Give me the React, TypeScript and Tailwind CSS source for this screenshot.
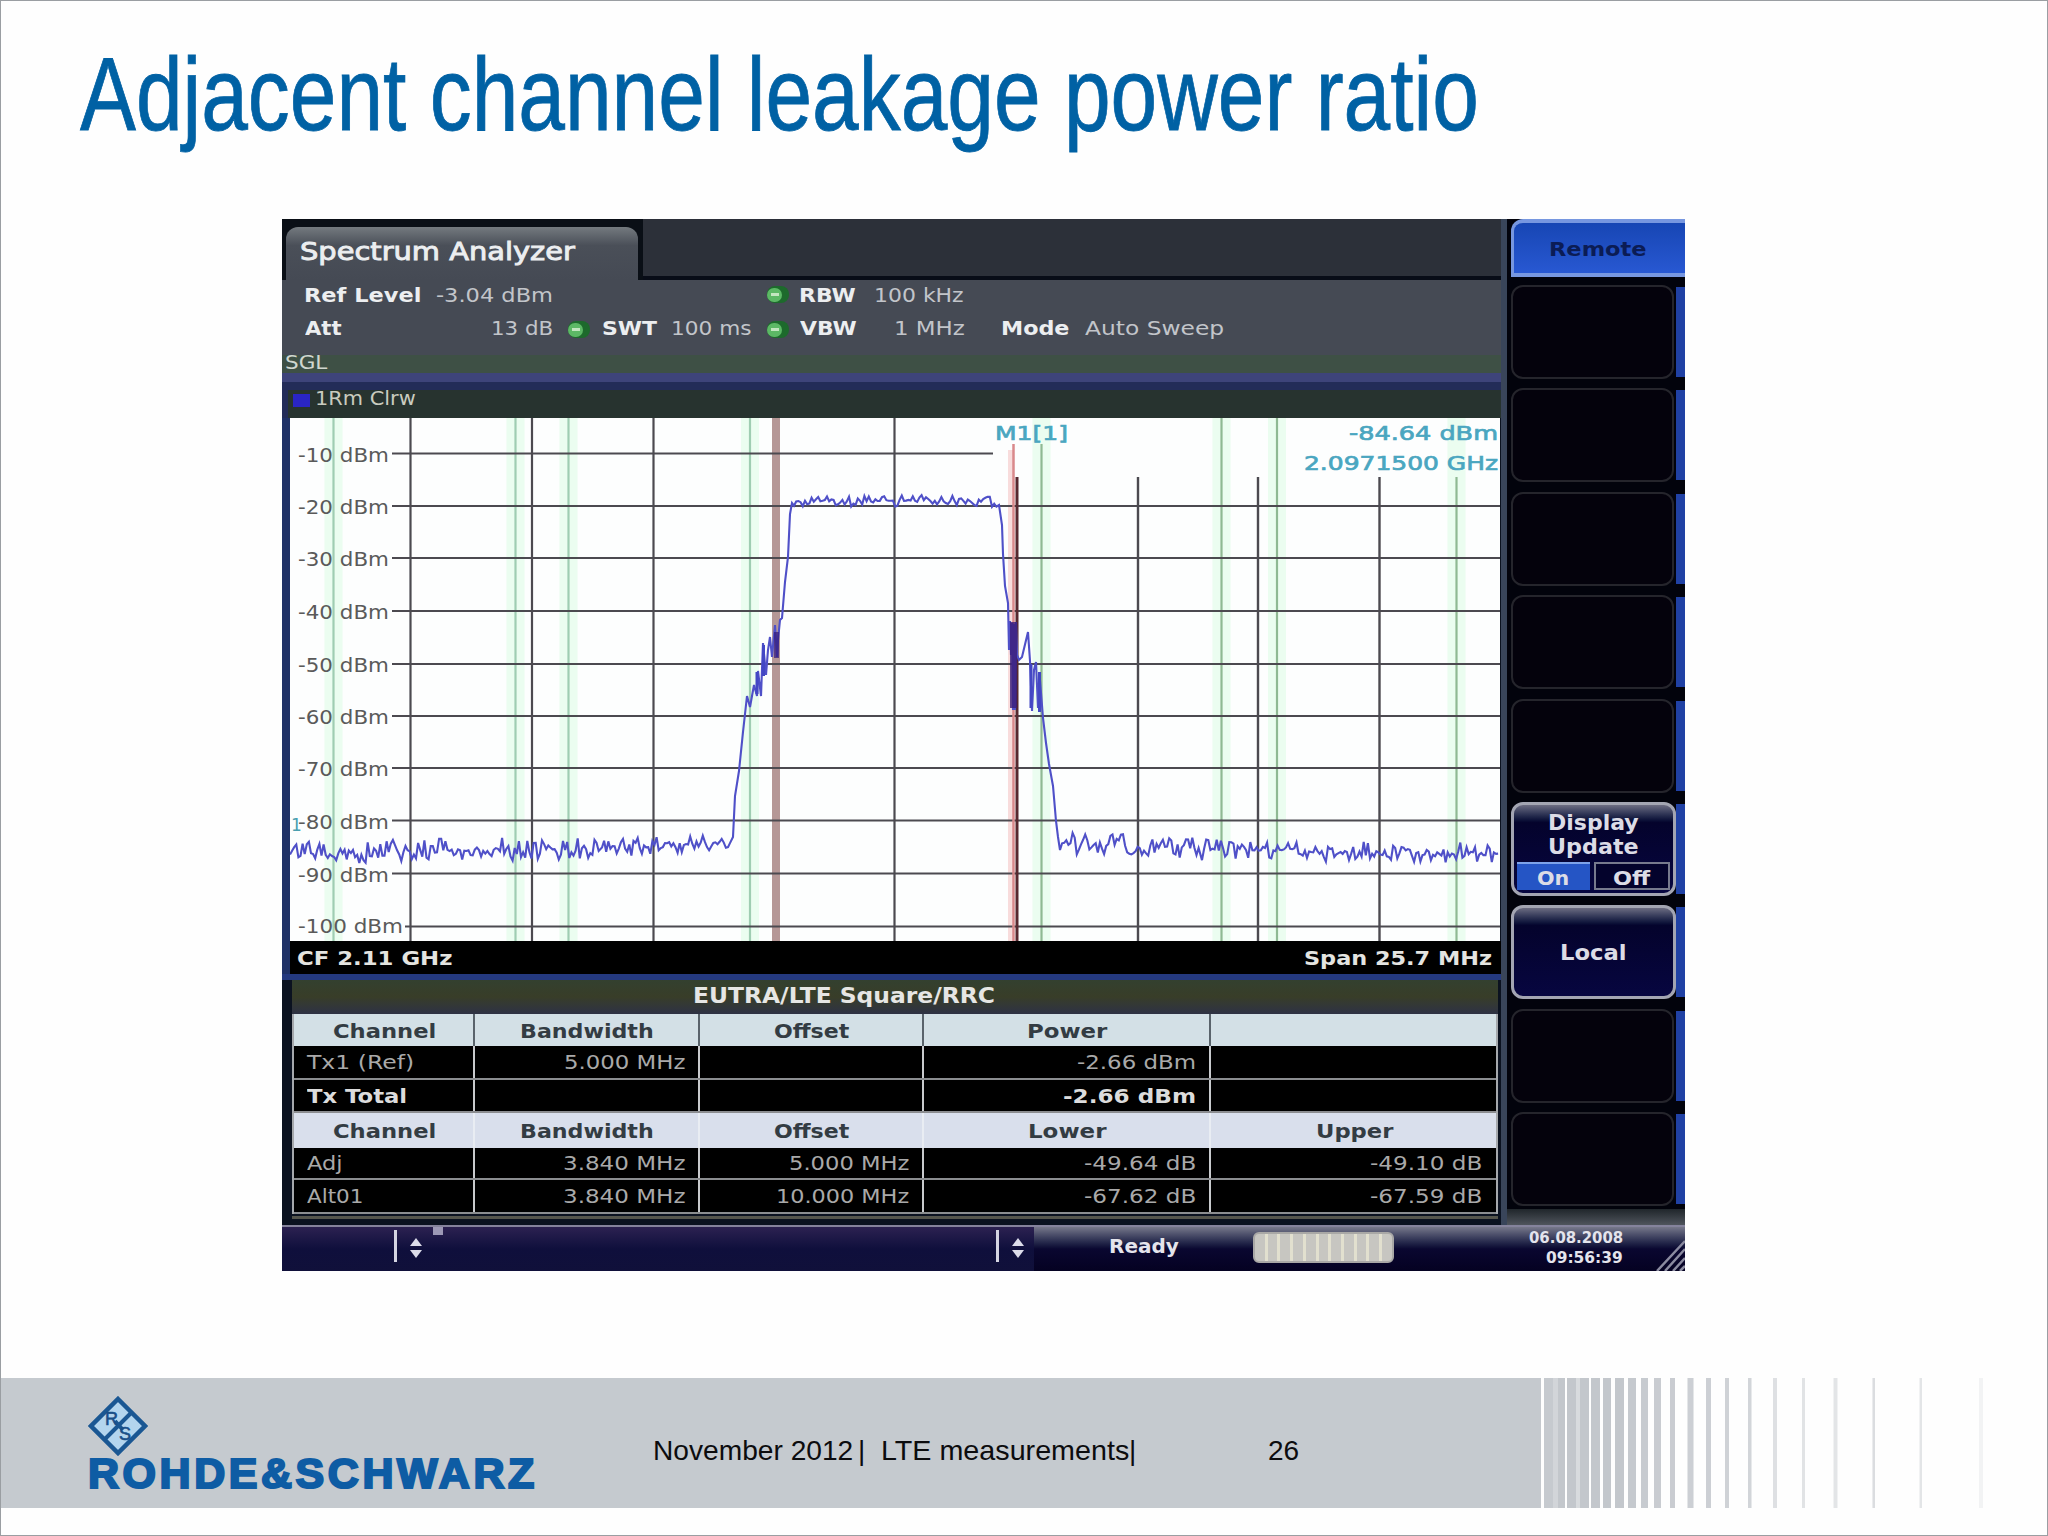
import { useLayoutEffect, useRef, useState } from "react";
import type { ReactNode } from "react";

// Text squeezed or stretched to an exact width
const Fit = ({
  w,
  className = "",
  children,
}: {
  w: number;
  className?: string;
  children: ReactNode;
}) => {
  const ref = useRef<HTMLSpanElement>(null);
  const [scale, setScale] = useState(1);

  useLayoutEffect(() => {
    if (ref.current) setScale(w / ref.current.offsetWidth);
  }, [w]);

  return (
    <span className={`block shrink-0 ${className}`} style={{ width: w }}>
      <span
        ref={ref}
        className="inline-block origin-left whitespace-pre"
        style={{ transform: `scaleX(${scale})` }}
      >
        {children}
      </span>
    </span>
  );
};

const Dot = ({ className = "" }: { className?: string }) => (
  <span
    className={`flex h-[17px] w-[22px] shrink-0 items-center rounded-lg bg-[#1d6a2c] ${className}`}
  >
    <span className="flex h-[14px] w-[15px] items-center justify-center rounded-full bg-[#5cb865]">
      <span className="h-[3px] w-2 bg-[#c3e6c0]" />
    </span>
  </span>
);

const gridX = [410.5, 532, 653.5, 894.5];
const gridXRight = [1138, 1258, 1379.5];
const levels = [453.5, 506, 558, 611, 664, 716, 768, 820.5, 873.5, 926.5];
const channels = [333.5, 515.5, 568.5, 750, 1041.5, 1221.5, 1277, 1456.5];

const noise = (i: number) => {
  const v = Math.sin(i * 12.9898) * 43758.5453;
  return v - Math.floor(v) - 0.5;
};

const run = (x0: number, x1: number, y0: number, y1: number, amp: number, step: number) => {
  const pts: string[] = [];
  for (let x = x0; x <= x1; x += step) {
    const t = (x - x0) / (x1 - x0);
    const n = noise(x);
    pts.push(`${x.toFixed(1)},${(y0 + (y1 - y0) * t + (n * 0.5 + n * Math.abs(n) * 2) * amp).toFixed(1)}`);
  }
  return pts.join(" ");
};

const trace = [
  run(290, 600, 852, 849, 16, 2.1),
  run(602, 731, 848, 843, 14, 2.1),
  "733,837 735,796 739,771 743,732 747,696 750,707 754,685 757,696 758,671 761,696 763,643 766,675 768,650 770,637 772,657 775,625 777,657 778,640 780,620 782,618 785,582 788,557 790,514 792,503",
  run(794, 998, 501, 501, 8, 2.2),
  "999,505 1002,525 1003,554 1005,586 1008,603 1009,650 1010,621 1011,655 1012,623 1013,710 1014,624 1015,710 1016,622 1017,655 1019,660 1022,657 1028,632 1030,661 1032,711 1034,670 1036,662 1038,708 1040,680 1043,718 1046,743 1049,764 1053,786 1056,821 1058,837",
  run(1060, 1200, 843, 848, 15, 2.1),
  run(1202, 1500, 850, 853, 14, 2.1),
].join(" ");

const Plot = () => (
  <svg
    viewBox="290 418 1210 523"
    className="block h-[523px] w-[1210px] shrink-0 bg-[#fdfefe] font-['DejaVu_Sans']"
  >
    {channels.map((x) => (
      <g key={x}>
        <rect x={x - 9} y="418" width="18" height="523" fill="#dcfbe4" opacity="0.55" />
        <line
          x1={x}
          x2={x}
          y1={x === 1456.5 ? 477 : x === 1041.5 ? 444 : 418}
          y2="941"
          stroke={x < 800 ? "#9fcdb2" : "#8fb993"}
          strokeWidth="2.2"
        />
      </g>
    ))}
    <rect x="1008" y="450" width="6" height="491" fill="#f8dcdc" />
    <rect x="772" y="418" width="8" height="523" fill="#b59796" />
    {levels.map((y, i) => (
      <line
        key={y}
        x1={i === 9 ? 405 : 392}
        x2={i === 0 ? 993 : 1500}
        y1={y}
        y2={y}
        stroke="#4c4a50"
        strokeWidth="2"
      />
    ))}
    {gridX.map((x) => (
      <line key={x} x1={x} x2={x} y1="418" y2="941" stroke="#4c4a50" strokeWidth="2.2" />
    ))}
    {gridXRight.map((x) => (
      <line key={x} x1={x} x2={x} y1="477" y2="941" stroke="#4c4a50" strokeWidth="2.4" />
    ))}
    <line x1="1013.5" x2="1013.5" y1="444" y2="941" stroke="#d9898b" strokeWidth="2.5" />
    <line x1="1017" x2="1017" y1="477" y2="941" stroke="#57282f" strokeWidth="3" />
    <polyline points={trace} fill="none" stroke="#4f50c8" strokeWidth="2.1" />
    <path d="M757 672V694M763.5 645V676M1031 664V708M1039.5 672V712" stroke="#4347c4" strokeWidth="3" />
    <rect x="1010" y="622" width="7" height="86" fill="#3b1d78" opacity="0.8" />
    <rect x="774" y="632" width="5" height="26" fill="#33187a" opacity="0.7" />
    <g fontSize="19" fill="#5a5a5a">
      {levels.map((y, i) => (
        <text
          key={y}
          x="298"
          y={i === 9 ? y + 6 : y + 8}
          textLength={i === 9 ? 105 : 91}
          lengthAdjust="spacingAndGlyphs"
        >
          {`-${(i + 1) * 10} dBm`}
        </text>
      ))}
    </g>
    <text x="291" y="831" fontSize="17" fill="#4a9fb0">
      1
    </text>
    <g fontSize="20" fill="#4aa6c0" stroke="#4aa6c0" strokeWidth="0.7">
      <text x="995" y="440" textLength="73" lengthAdjust="spacingAndGlyphs">
        M1[1]
      </text>
      <text x="1349" y="440" textLength="149" lengthAdjust="spacingAndGlyphs">
        -84.64 dBm
      </text>
      <text x="1304" y="470" textLength="194" lengthAdjust="spacingAndGlyphs">
        2.0971500 GHz
      </text>
    </g>
  </svg>
);

type Cell = { text: string; w: number; bold?: boolean };

const rows: { head?: boolean; height: string; cells: (Cell | null)[] }[] = [
  {
    head: true,
    height: "h-[32px]",
    cells: [
      { text: "Channel", w: 103 },
      { text: "Bandwidth", w: 134 },
      { text: "Offset", w: 75 },
      { text: "Power", w: 80 },
      null,
    ],
  },
  {
    height: "h-[34px]",
    cells: [{ text: "Tx1 (Ref)", w: 107 }, { text: "5.000 MHz", w: 121 }, null, { text: "-2.66 dBm", w: 119 }, null],
  },
  {
    height: "h-[33px]",
    cells: [{ text: "Tx Total", w: 100, bold: true }, null, null, { text: "-2.66 dBm", w: 133, bold: true }, null],
  },
  {
    head: true,
    height: "h-[35px]",
    cells: [
      { text: "Channel", w: 103 },
      { text: "Bandwidth", w: 134 },
      { text: "Offset", w: 75 },
      { text: "Lower", w: 78 },
      { text: "Upper", w: 77 },
    ],
  },
  {
    height: "h-[32px]",
    cells: [
      { text: "Adj", w: 36 },
      { text: "3.840 MHz", w: 122 },
      { text: "5.000 MHz", w: 120 },
      { text: "-49.64 dB", w: 112 },
      { text: "-49.10 dB", w: 112 },
    ],
  },
  {
    height: "h-[34px]",
    cells: [
      { text: "Alt01", w: 57 },
      { text: "3.840 MHz", w: 122 },
      { text: "10.000 MHz", w: 133 },
      { text: "-67.62 dB", w: 112 },
      { text: "-67.59 dB", w: 112 },
    ],
  },
];

const ResultTable = () => (
  <div className="ml-[10px] w-[1206px] border-l-2 border-r-2 border-[#a5a8ac] bg-black">
    {rows.map((row, r) => (
      <div
        key={r}
        className={`grid grid-cols-[181px_225px_224px_287px_1fr] ${row.height} ${
          row.head
            ? r === 0
              ? "bg-[#d3e0e6]"
              : "bg-[#d9dfec]"
            : "border-b-2 border-[#8b8d90]"
        }`}
      >
        {row.cells.map((cell, c) => (
          <div
            key={c}
            className={`flex items-center ${
              c < 4
                ? row.head
                  ? r === 0
                    ? "border-r-2 border-[#59636b]"
                    : "border-r-2 border-[#e9edf3]"
                  : "border-r-2 border-[#c8cacd]"
                : ""
            } ${
              row.head
                ? "justify-center pt-px pl-px text-xl font-bold text-[#333c43]"
                : c === 0
                ? "pl-[13px] text-xl"
                : c === 4
                ? "justify-end pr-[14px] text-xl"
                : "justify-end pr-[13px] text-xl"
            } ${row.head ? "" : cell?.bold ? "font-bold text-[#dcdcdc]" : "text-[#a9a9a9]"}`}
          >
            {cell && <Fit w={cell.w}>{cell.text}</Fit>}
          </div>
        ))}
      </div>
    ))}
  </div>
);

const EmptyKey = () => (
  <div className="flex h-[94px] shrink-0 items-stretch">
    <div className="w-[163px] rounded-xl border-2 border-[#25252c] bg-[#04020c]" />
    <div className="my-0.5 ml-0.5 flex-1 bg-[#2041a4]" />
  </div>
);

const SoftKey = ({ children }: { children: ReactNode }) => (
  <div className="flex h-[94px] shrink-0 items-stretch">
    <div className="flex w-[165px] flex-col items-center rounded-xl border-[3px] border-[#a3a5b2] bg-linear-to-b from-[#6d6d82] via-[#04032c] via-20% to-[#070640] font-bold text-[#dcdce6]">
      {children}
    </div>
    <div className="my-0.5 flex-1 bg-[#2041a4]" />
  </div>
);

const Sidebar = () => (
  <div className="flex h-[1006px] w-[178px] flex-col bg-[#02030c] pl-1">
    <div className="flex h-[58px] shrink-0 items-center justify-center rounded-tl-xl border-b-4 border-l-[3px] border-t-4 border-[#7797e0] bg-linear-to-b from-[#1746b4] to-[#2858d2]">
      <Fit w={98} className="-ml-1 pt-0.5 text-xl font-bold text-[#0b1c55]">
        Remote
      </Fit>
    </div>
    <div className="mt-2 flex flex-1 flex-col gap-[9.4px]">
      <EmptyKey />
      <EmptyKey />
      <EmptyKey />
      <EmptyKey />
      <EmptyKey />
      <SoftKey>
        <Fit w={91} className="mt-1.5 text-[22px] leading-[24px]">
          Display
        </Fit>
        <Fit w={91} className="text-[22px] leading-[24px]">
          Update
        </Fit>
        <div className="mt-[3px] flex w-full gap-1 px-[3px] text-xl leading-[28px]">
          <div className="flex h-[28px] flex-1 justify-center border-t-2 border-[#7da3ea] bg-[#2555c5]">
            <Fit w={32}>On</Fit>
          </div>
          <div className="flex h-[28px] flex-1 justify-center border-2 border-[#777a8d] bg-[#04032c]">
            <Fit w={37}>Off</Fit>
          </div>
        </div>
      </SoftKey>
      <SoftKey>
        <Fit w={67} className="mt-[32px] text-[22px] leading-[26px]">
          Local
        </Fit>
      </SoftKey>
      <EmptyKey />
      <EmptyKey />
    </div>
    <div className="-ml-1 h-4 shrink-0 bg-linear-to-b from-[#20262b] to-[#50555d]" />
  </div>
);

const Spinner = ({ className = "" }: { className?: string }) => (
  <div className={`flex items-center gap-3 ${className}`}>
    <div className="h-8 w-[3px] bg-[#d5d5e2]" />
    <svg viewBox="0 0 14 20" className="mt-1 h-5 w-3.5">
      <path d="M7 0l6 8H1zM7 20l6-8H1z" fill="#dcdcea" />
    </svg>
  </div>
);

const StatusBar = () => (
  <div className="flex h-[46px] border-t-2 border-[#85839c] bg-[#10103c] font-bold text-[#e4e4ec]">
    <div className="flex w-[155px] items-start bg-linear-to-b from-[#2c2151] via-[#0f0f3c] to-[#10103a] pt-[3px]">
      <Spinner className="ml-[112px]" />
    </div>
    <div className="flex w-[597px] bg-linear-to-b from-[#2c2151] via-[#0f0f3c] to-[#10103a] pt-[3px]">
      <div className="-mt-[3px] -ml-1 h-2 w-2.5 bg-[#9c98b5]" />
      <Spinner className="ml-[553px] self-start" />
    </div>
    <div className="flex flex-1 items-start bg-linear-to-b from-[#77788a] via-[#0a0730] via-50% to-[#050222]">
      <Fit w={70} className="ml-[75px] mt-[5px] text-xl leading-7">
        Ready
      </Fit>
      <div className="ml-[74px] mt-[5px] flex h-[31px] w-[141px] justify-evenly rounded-md border-2 border-[#a9a8a6] bg-[#c7c6c1]">
        {Array.from({ length: 10 }).map((_, i) => (
          <span key={i} className="w-[3px] bg-[#e2e0cf]" />
        ))}
      </div>
      <div className="ml-[135px] mt-px flex flex-col items-end text-[16px] leading-[19.5px]">
        <Fit w={94}>06.08.2008</Fit>
        <Fit w={77}>09:56:39</Fit>
      </div>
      <svg viewBox="0 0 30 32" className="ml-[32px] mt-[12px] h-8 w-[30px]">
        <path d="M2 32L30 2M10 32L30 10M18 32L30 19M25 32L30 27" stroke="#8b8ba0" strokeWidth="2.5" />
      </svg>
    </div>
  </div>
);

const Analyzer = () => (
  <div className="ml-[281px] flex h-[1052px] w-[1403px] flex-col overflow-hidden bg-[#0a0d12] font-['DejaVu_Sans',sans-serif]">
    <div className="flex h-[1006px]">
      <div className="flex w-[1225px] flex-col border-r-[6px] border-[#39455a] bg-[#0b1220]">
        <div className="flex h-[61px] bg-[#2c3039]">
          <div className="flex w-[361px] bg-[#0a0f16] pl-1 pt-2">
            <div className="flex w-[352px] items-center rounded-t-xl bg-linear-to-b from-[#747a7f] via-[#4a4f58] via-35% to-[#454a54] pl-3.5">
              <Fit w={275} className="-mt-1 text-[25px] text-[#eceef0] [-webkit-text-stroke:0.9px_#eceef0]">
                Spectrum Analyzer
              </Fit>
            </div>
          </div>
          <div className="flex-1 border-b-4 border-[#080c17]" />
        </div>
        <div className="h-[75px] bg-[#454a54] text-xl leading-[33px] text-[#c2c5ca]">
          <div className="flex h-[32px] pl-[22px] leading-[30px]">
            <Fit w={117} className="font-bold text-[#eceef0]">Ref Level</Fit>
            <Fit w={117} className="ml-[15px]">-3.04 dBm</Fit>
            <Dot className="ml-[214px] mt-[6px]" />
            <Fit w={57} className="ml-[10px] font-bold text-[#eceef0]">RBW</Fit>
            <Fit w={90} className="ml-[18px]">100 kHz</Fit>
          </div>
          <div className="flex h-[33px] pl-[23px]">
            <Fit w={37} className="font-bold text-[#eceef0]">Att</Fit>
            <Fit w={62} className="ml-[149px]">13 dB</Fit>
            <Dot className="ml-[15px] mt-[9px]" />
            <Fit w={55} className="ml-[12px] font-bold text-[#eceef0]">SWT</Fit>
            <Fit w={80} className="ml-[14px]">100 ms</Fit>
            <Dot className="ml-[16px] mt-[9px]" />
            <Fit w={57} className="ml-[11px] font-bold text-[#eceef0]">VBW</Fit>
            <Fit w={71} className="ml-[37px]">1 MHz</Fit>
            <Fit w={69} className="ml-[36px] font-bold text-[#eceef0]">Mode</Fit>
            <Fit w={139} className="ml-[15px]">Auto Sweep</Fit>
          </div>
        </div>
        <div className="h-[18px] bg-[#3e5045] pl-[3px] text-xl leading-[14px] text-[#cfd6cf]">
          <Fit w={42}>SGL</Fit>
        </div>
        <div className="h-[9px] shrink-0 bg-[#3e447a]" />
        <div className="flex h-[36px] shrink-0 items-start border-l-[6px] border-t-[8px] border-[#232c58] bg-[#27332f] pl-[5px] text-[19px] leading-[22px] text-[#c9cbbf]">
          <div className="mt-1 h-[13px] w-[17px] bg-[#2a25c4]" />
          <Fit w={101} className="-mt-[3px] ml-[5px]">1Rm Clrw</Fit>
        </div>
        <div className="flex border-l-8 border-[#1f3166]">
          <Plot />
        </div>
        <div className="flex h-[33px] shrink-0 items-center justify-between border-l-8 border-[#1f3166] bg-black pl-[7px] pr-[9px] text-xl font-bold text-[#e4e4e0]">
          <Fit w={155}>CF 2.11 GHz</Fit>
          <Fit w={188}>Span 25.7 MHz</Fit>
        </div>
        <div className="h-[6px] shrink-0 bg-[#24397f]" />
        <div className="ml-[10px] flex h-[34px] w-[1206px] shrink-0 items-center bg-linear-to-b from-[#33402f] via-[#383d28] to-[#2e3144] pl-[401px] text-[21px] font-bold text-[#e6e6e4]">
          <Fit w={302}>EUTRA/LTE Square/RRC</Fit>
        </div>
        <ResultTable />
        <div className="ml-[10px] mt-0.5 h-[3px] w-[1206px] bg-[#55554c]" />
      </div>
      <Sidebar />
    </div>
    <StatusBar />
  </div>
);

// [x, width, opacity] of the bars fading out on the right of the footer
const bars = [
  [1520, 21, 0.97],
  [1544, 9, 0.95],
  [1553, 5, 0.75],
  [1558, 7, 1],
  [1567, 9, 1],
  [1576, 4, 0.65],
  [1580, 9, 1],
  [1591, 9, 1],
  [1603, 8, 1],
  [1615, 9, 1],
  [1628, 8, 0.97],
  [1641, 7, 0.93],
  [1654, 7, 0.9],
  [1670, 5, 0.9],
  [1687.5, 6, 0.85],
  [1706, 5, 0.85],
  [1725, 4, 0.8],
  [1748, 3.5, 0.75],
  [1773, 4, 0.55],
  [1802, 3, 0.5],
  [1833.5, 4, 0.45],
  [1872.5, 2.5, 0.6],
  [1919.5, 2.5, 0.45],
  [1979, 4, 0.2],
];

const Logo = () => (
  <div className="flex w-[460px] flex-col pl-[87px] pt-[18px]">
    <svg viewBox="0 0 60 60" className="block h-[60px] w-[60px] shrink-0">
      <path d="M30 3L57 30 30 57 3 30z" fill="#b3d5ee" stroke="#1a5793" strokeWidth="4.5" />
      <path d="M43 17L17 43M27 25L35 34" stroke="#1a5793" strokeWidth="4" />
      <g fontFamily="Liberation Sans" fontSize="18" fill="#1a4f88" stroke="#1a4f88" strokeWidth="0.6">
        <text x="17" y="29">R</text>
        <text x="31" y="44">S</text>
      </g>
    </svg>
    <Fit
      w={450}
      className="-mt-[4px] font-['Liberation_Sans'] text-[42px] font-bold leading-[44px] tracking-[3.5px] text-[#0e5ca4] [-webkit-text-stroke:2.2px_#0e5ca4]"
    >
      ROHDE&SCHWARZ
    </Fit>
  </div>
);

const Footer = () => (
  <div className="mt-[107px] flex h-[130px] w-[2046px] font-['Liberation_Sans',sans-serif]">
    <div className="flex w-[1519px] bg-[#c5cacf] text-[28px] leading-[30px] text-[#0c0c0e]">
      <Logo />
      <Fit w={200} className="ml-[192px] mt-[58px]">November 2012</Fit>
      <Fit w={7} className="ml-[5px] mt-[58px]">|</Fit>
      <Fit w={248} className="ml-[16px] mt-[58px]">LTE measurements</Fit>
      <Fit w={7} className="mt-[58px]">|</Fit>
      <Fit w={31} className="ml-[132px] mt-[58px]">26</Fit>
    </div>
    <svg viewBox="1520 0 527 130" className="h-[130px] w-[527px]">
      {bars.map(([x, w, o]) => (
        <rect key={x} x={x} y="0" width={w} height="130" fill="#c3c7cc" opacity={o} />
      ))}
    </svg>
  </div>
);

export default function App() {
  return (
    <div className="h-[1536px] w-[2048px] overflow-hidden border border-[#9a9ea2] bg-[#fefefe]">
      <div className="h-[218px] pl-[79px] pt-[42px] font-['Liberation_Sans',sans-serif] text-[103px] leading-[104px] text-[#0061a4] [-webkit-text-stroke:0.8px_#0061a4]">
        <Fit w={1399}>Adjacent channel leakage power ratio</Fit>
      </div>
      <Analyzer />
      <Footer />
    </div>
  );
}
